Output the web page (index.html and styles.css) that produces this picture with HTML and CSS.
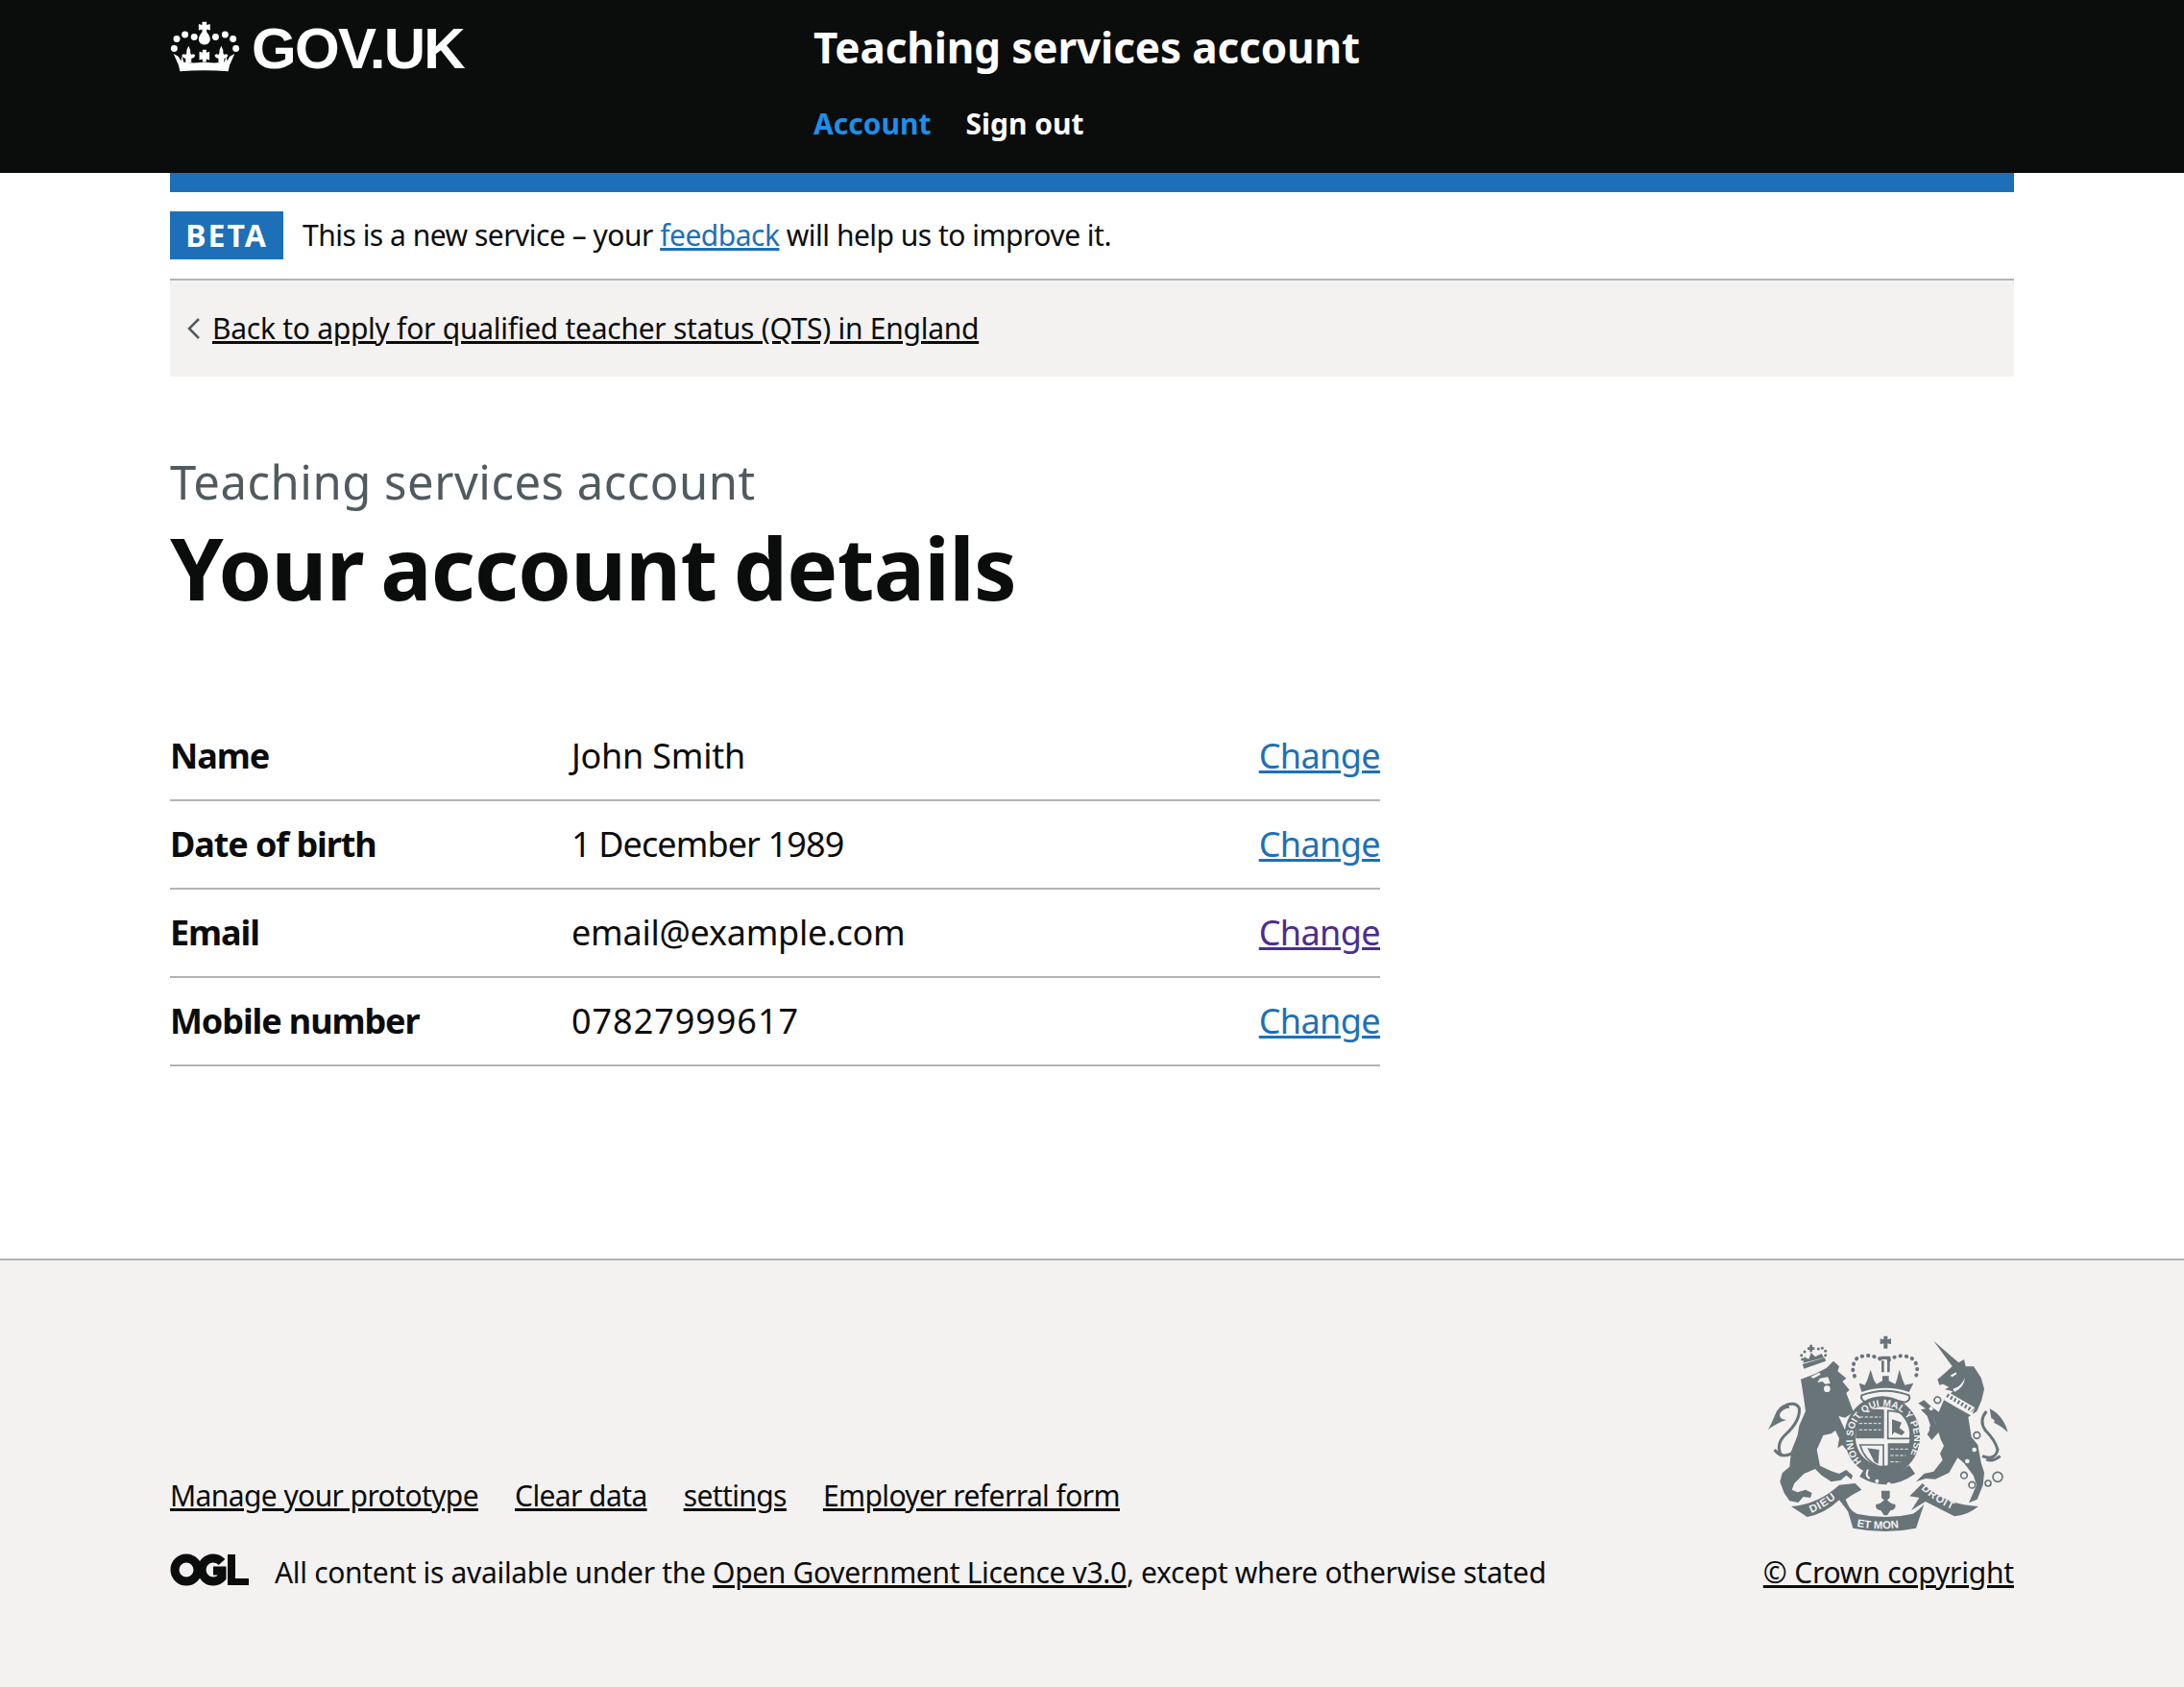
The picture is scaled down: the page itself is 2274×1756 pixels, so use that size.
FILE: index.html
```html
<!DOCTYPE html>
<html lang="en">
<head>
    <meta charset="UTF-8">
    <meta name="viewport" content="width=device-width, initial-scale=1.0">
    <title>Your account details - Teaching services account</title>
    <link rel="stylesheet" href="styles.css">
</head>
<body>
    <header class="site-header">
        <div class="container header-inner">
            <a class="logo" href="#">
                <svg class="crown" viewBox="50 62 218 160" aria-hidden="true">
                    <defs>
                        <path id="fleur" d="M0 140q7 12 6 22l3 6q8-6 12 2-2 8-12 10v12H-9v-12q-10-2-12-10 4-8 12-2l3-6q-1-10 6-22z"/>
                    </defs>
                    <g fill="#fff">
                        <circle cx="70" cy="118" r="10.5"/><circle cx="96" cy="104" r="10.5"/><circle cx="125" cy="112" r="10.5"/>
                        <circle cx="192" cy="112" r="10.5"/><circle cx="222" cy="104" r="10.5"/><circle cx="247" cy="118" r="10.5"/>
                        <circle cx="62" cy="148" r="10.5"/><circle cx="256" cy="148" r="10.5"/>
                        <path d="M150 64h14v10l11-3v20l-11-3v8c7 8 11 16 11 24a18 16 0 0 1-36 0c0-8 4-16 11-24v-8l-11 3V71l11 3z"/>
                        <use href="#fleur" x="107"/>
                        <use href="#fleur" x="210"/>
                        <path d="M151 152h12v9l10-3v26l-10-3v9h-12v-9l-10 3v-26l10 3z"/>
                        <path d="M60 165l15 8 9 14 2-16 6 20 32 2 32-2 32 2 32-2 6-20 2 16 9-14 15-8-16 36-4 19q-76-6-152 0l-4-19z"/>
                    </g>
                </svg>
                <span class="logo-text">GOV.UK</span>
            </a>
            <div class="service">
                <a class="service-name" href="#">Teaching services account</a>
                <nav class="service-nav">
                    <a class="active" href="#">Account</a>
                    <a href="#">Sign out</a>
                </nav>
            </div>
        </div>
    </header>

    <div class="container">
        <div class="blue-bar"></div>
        <div class="phase-banner">
            <strong class="tag">BETA</strong>
            <span>This is a new service – your <a class="link" href="#">feedback</a> will help us to improve it.</span>
        </div>
        <div class="back-section">
            <svg class="chevron" viewBox="0 0 14 22" aria-hidden="true"><polyline points="12,1 2,11 12,21"/></svg>
            <a href="#">Back to apply for qualified teacher status (QTS) in England</a>
        </div>

        <main class="main">
            <span class="caption">Teaching services account</span>
            <h1>Your account details</h1>

            <dl class="summary-list">
                <div class="summary-row">
                    <dt>Name</dt>
                    <dd>John Smith</dd>
                    <dd class="actions"><a class="link" href="#">Change</a></dd>
                </div>
                <div class="summary-row">
                    <dt>Date of birth</dt>
                    <dd class="date">1 December 1989</dd>
                    <dd class="actions"><a class="link" href="#">Change</a></dd>
                </div>
                <div class="summary-row">
                    <dt>Email</dt>
                    <dd>email@example.com</dd>
                    <dd class="actions"><a class="link visited" href="#">Change</a></dd>
                </div>
                <div class="summary-row">
                    <dt>Mobile number</dt>
                    <dd class="phone">07827999617</dd>
                    <dd class="actions"><a class="link" href="#">Change</a></dd>
                </div>
            </dl>
        </main>
    </div>

    <footer class="site-footer">
        <div class="container footer-inner">
            <div class="footer-meta">
                <ul class="footer-links">
                    <li><a href="#">Manage your prototype</a></li>
                    <li><a href="#">Clear data</a></li>
                    <li><a href="#">settings</a></li>
                    <li><a href="#">Employer referral form</a></li>
                </ul>
                <div class="licence">
                    <svg class="ogl" viewBox="0 0 82 34" aria-hidden="true">
                        <circle class="ogl-stroke" cx="17" cy="17" r="12"/>
                        <path class="ogl-stroke" d="M54 9a12 12 0 1 0 0 16V18H45"/>
                        <path d="M60 1h8v25h14v7H60z" fill="#0b0c0c"/>
                    </svg>
                    <span>All content is available under the <a href="#">Open Government Licence v3.0</a>, except where otherwise stated</span>
                </div>
            </div>
            <div class="footer-crest">
                <svg class="crest" viewBox="0 0 780 630" aria-hidden="true">
                    <defs>
                        <path id="garter" d="M70 368A96 102 0 1 1 206 368"/>
                        <path id="ribbon-left" d="M258 618Q315 595 362 545"/>
                        <path id="ribbon-mid" d="M400 660Q490 676 580 655"/>
                        <path id="ribbon-right" d="M600 542Q650 590 725 618"/>
                    </defs>

                    <!-- lion -->
                    <g transform="translate(0 15)">
                        <path class="crest-fill" d="M120 125L165 108 200 90 222 68 240 85 235 100 262 122 250 132 272 158 262 168 285 228 258 245 238 240 262 292 282 320 280 345 262 345 250 330 235 340 240 310 228 285 215 295 190 300 170 345 180 395 215 412 240 420 262 408 282 425 278 438 262 425 245 440 215 445 185 425 165 405 130 420 100 450 92 470 110 478 135 470 155 480 150 495 128 492 112 510 85 505 68 480 55 445 62 418 85 398 90 350 110 300 115 270 135 225 128 175Z"/>
                        <path class="crest-fill" d="M80 200Q50 205 38 240 28 265 18 282 45 262 75 252 50 250 55 232 65 215 85 215Z"/>
                        <path class="crest-stroke" d="M95 355Q60 375 38 345M60 365Q40 330 70 300 120 255 115 215 105 195 75 205"/>
                        <path class="crest-hole" d="M172 135L180 122 205 118 212 138 196 140 188 132ZM150 118L178 104 182 110 160 122Z"/>
                        <circle class="crest-hole" cx="202" cy="155" r="10"/>
                        <!-- lion crown -->
                        <path class="crest-fill" d="M130 92L125 78 195 58 198 68ZM128 74L130 55 145 62 152 42 165 55 185 45 192 58Z"/>
                        <path class="crest-fill" d="M148 40V33H141V25H148V17H156V25H163V33H156V40Z"/>
                        <g class="crest-fill">
                            <circle cx="122" cy="50" r="4.5"/><circle cx="125" cy="63" r="4.5"/><circle cx="132" cy="39" r="4.5"/>
                            <circle cx="175" cy="30" r="4.5"/><circle cx="187" cy="28" r="4.5"/><circle cx="197" cy="37" r="4.5"/><circle cx="197" cy="50" r="4.5"/>
                        </g>
                    </g>

                    <!-- shield and crown -->
                    <g transform="translate(240 30)">
                        <path class="crest-fill" d="M139 -25H151V-14L162 -17V1L151 -2V14H139V-2L128 1V-17L139 -14ZM130 38H160V48H130ZM132 52H140V88H132ZM150 52H158V88H150Z"/>
                        <path class="crest-dots" d="M48 100Q35 70 55 45 90 25 135 50M155 50Q195 25 232 48 250 70 240 100"/>
                        <path class="crest-fill" d="M62 122L80 128 88 112 98 80 108 112 116 125 135 115 135 100H155V115L175 125 180 112 188 80 198 112 205 128 232 122 218 150Q145 125 70 150Z"/>
                        <path class="crest-band" d="M70 160Q145 132 218 160 225 175 205 182 145 165 85 182 65 175 70 160Z"/>
                        <path class="crest-fill" fill-rule="evenodd" d="M135 163A118 125 0 1 1 134 163ZM135 196A85 92 0 1 0 136 196Z"/>
                        <path class="crest-fill" d="M58 212Q100 200 140 205V295H52Q50 250 58 212ZM152 310H222Q212 370 152 398Z"/>
                        <path class="crest-fine" d="M152 208Q190 208 218 228 226 260 221 295H152ZM65 315H138V388Q80 370 65 315Z"/>
                        <path class="crest-fill" d="M165 235L195 245 188 262 205 275 195 285 172 275 165 285ZM88 325L125 330 122 375 110 368Z"/>
                        <path class="crest-charge" d="M65 228H130M62 248H130M62 268H130M160 328H215M160 348H208M160 368H192"/>
                        <path class="crest-strap" d="M72 400Q150 448 228 392"/>
                        <circle class="crest-hole" cx="118" cy="428" r="6"/>
                        <circle class="crest-hole" cx="155" cy="437" r="6"/>
                        <path class="crest-line" d="M90 392Q80 412 95 420"/>
                    </g>

                    <!-- unicorn -->
                    <g transform="translate(465 0)">
                        <path class="crest-fill" d="M70 20L148 88 165 78 170 100 195 100 218 135 228 170 220 205 205 240 178 258 188 320 208 345 218 400 228 432 224 470 206 515 180 526 192 498 204 470 194 440 165 402 145 385 118 432 75 452 45 450 15 460 40 435 70 428 98 392 90 372 102 348 92 328 78 282 66 252 86 305 64 330 50 312 62 290 50 255 30 235 45 232 22 215 40 205 62 225 86 242 104 200 130 178 105 172 118 165 100 155 88 158 82 140 100 125 128 100Z"/>
                        <path class="crest-fill" d="M245 232Q285 250 302 305 280 285 258 275 265 268 250 262Z"/>
                        <path class="crest-stroke" d="M222 380Q262 395 270 360 262 330 232 300 210 270 235 240M235 390Q250 400 278 380"/>
                        <path class="crest-hole" d="M130 170Q155 165 168 135 165 165 135 180ZM122 128L140 118 142 124 128 133Z"/>
                        <path class="crest-hole" d="M112 178L198 228 190 255 102 205Z"/>
                        <path class="crest-crenel" d="M112 190L192 238"/>
                        <circle class="crest-hole" cx="197" cy="360" r="7"/>
                        <circle class="crest-hole" cx="175" cy="396" r="7"/>
                        <circle class="crest-hole" cx="62" cy="232" r="6"/>
                        <g class="crest-ring">
                            <circle cx="82" cy="205" r="10"/><circle cx="70" cy="292" r="11"/><circle cx="205" cy="315" r="10"/>
                            <circle cx="165" cy="440" r="10"/><circle cx="190" cy="470" r="10"/><circle cx="240" cy="465" r="9"/><circle cx="270" cy="445" r="15"/>
                        </g>
                    </g>

                    <!-- ribbon -->
                    <g transform="translate(-105 -60)">
                        <path class="crest-fill" d="M195 597Q280 590 345 530L395 525 415 545Q385 560 365 575 375 600 385 610L372 612Q355 590 345 577 300 620 245 630Z"/>
                        <path class="crest-fill" d="M368 598Q385 612 400 620 490 640 575 620 590 612 610 590L600 620 585 665Q490 685 388 665Z"/>
                        <path class="crest-fill" d="M565 565L605 525Q670 590 780 597 745 625 705 628 650 600 615 582 600 590 570 610L595 570Z"/>
                        <path class="crest-fill" d="M477 548H503V570L490 582 477 570ZM490 572Q505 590 520 590 525 605 505 610L495 625H485L475 610Q455 605 460 590 475 590 490 572Z"/>
                    </g>

                    <g class="crest-text">
                        <text font-size="30" transform="translate(240 30)"><textPath href="#garter" textLength="440">HONI SOIT QUI MAL Y PENSE</textPath></text>
                        <g transform="translate(-105 -60)">
                            <text font-size="34" letter-spacing="3"><textPath href="#ribbon-left">DIEU</textPath></text>
                            <text font-size="34"><textPath href="#ribbon-mid">ET MON</textPath></text>
                            <text font-size="34" letter-spacing="3"><textPath href="#ribbon-right">DROIT</textPath></text>
                        </g>
                    </g>
                </svg>
                <a href="#">© Crown copyright</a>
            </div>
        </div>
    </footer>
</body>
</html>
```

FILE: styles.css
```css
/* General Styles */
* {
    box-sizing: border-box;
}

html, body {
    height: 100%;
}

body {
    display: flex;
    flex-direction: column;
    min-height: 1756px;
    margin: 0;
    font-family: "Noto Sans", Arial, sans-serif;
    font-size: 36px;
    line-height: 50px;
    letter-spacing: -0.25px;
    color: #0b0c0c;
    background-color: #fff;
}

a {
    color: inherit;
}

.container {
    width: 1920px;
    margin: 0 auto;
}

.link {
    color: #1d70b8;
}

.link.visited {
    color: #4c2c92;
}

/* Header */
.site-header {
    height: 180px;
    background-color: #0b0c0c;
}

.header-inner {
    display: flex;
}

.logo {
    display: flex;
    align-items: flex-start;
    width: 670px;
    padding-top: 22px;
    color: #fff;
    text-decoration: none;
}

.crown {
    width: 73px;
    height: 53px;
    margin-right: 12px;
}

.logo-text {
    padding-top: 2px;
    font-family: "Liberation Sans", Arial, sans-serif;
    font-weight: bold;
    font-size: 60px;
    line-height: 54px;
    letter-spacing: -1.7px;
}

.service {
    padding-top: 21px;
}

.service-name {
    display: block;
    font-weight: bold;
    font-size: 44px;
    line-height: 56px;
    letter-spacing: -0.1px;
    color: #fff;
    text-decoration: none;
}

.service-nav {
    display: flex;
    gap: 36px;
    margin-top: 27px;
    font-weight: bold;
    font-size: 30px;
    line-height: 50px;
    letter-spacing: 0;
}

.service-nav a {
    color: #fff;
    text-decoration: none;
}

.service-nav a.active {
    color: #1d8feb;
}

/* Phase banner */
.blue-bar {
    height: 20px;
    background-color: #1d70b8;
}

.phase-banner {
    display: flex;
    align-items: center;
    gap: 20px;
    height: 92px;
    font-size: 30px;
    letter-spacing: -0.5px;
    border-bottom: 2px solid #b1b4b6;
}

.tag {
    width: 118px;
    height: 50px;
    font-size: 32px;
    line-height: 50px;
    letter-spacing: 2px;
    text-align: center;
    color: #fff;
    background-color: #1d70b8;
}

/* Back link */
.back-section {
    display: flex;
    align-items: center;
    height: 100px;
    padding-left: 18px;
    font-size: 30px;
    letter-spacing: -0.27px;
    background-color: #f3f2f1;
}

.chevron {
    width: 14px;
    height: 22px;
    margin-right: 12px;
}

.chevron polyline {
    fill: none;
    stroke: #505a5f;
    stroke-width: 2.5;
}

/* Main */
.main {
    padding-top: 80px;
    padding-bottom: 200px;
}

.caption {
    display: block;
    font-size: 49px;
    line-height: 58px;
    letter-spacing: 0.5px;
    color: #505a5f;
}

h1 {
    margin: 11px 0 101px;
    font-size: 89px;
    line-height: 100px;
    letter-spacing: -0.7px;
    word-spacing: -5px;
}

.summary-list {
    width: 1260px;
    margin: 0;
}

.summary-row {
    display: flex;
    padding: 20px 0;
    border-bottom: 2px solid #b1b4b6;
}

.summary-row dt {
    width: 418px;
    font-weight: bold;
    letter-spacing: -1.1px;
}

.summary-row dd {
    margin: 0;
}

.summary-row .date {
    letter-spacing: -0.9px;
}

.summary-row .phone {
    letter-spacing: 0.95px;
}

.summary-row .actions {
    margin-left: auto;
    letter-spacing: -0.6px;
}

/* Footer */
.site-footer {
    flex: 1;
    padding-top: 77px;
    font-size: 30px;
    line-height: 40px;
    background-color: #f3f2f1;
    border-top: 2px solid #b1b4b6;
}

.footer-inner {
    display: flex;
    justify-content: space-between;
    align-items: flex-end;
}

.footer-links {
    display: flex;
    gap: 38px;
    margin: 0 0 40px;
    padding: 0;
    list-style: none;
    letter-spacing: -0.6px;
}

.licence {
    display: flex;
    align-items: flex-start;
    letter-spacing: -0.32px;
}

.ogl {
    width: 82px;
    height: 34px;
    margin-right: 27px;
}

.ogl-stroke {
    fill: none;
    stroke: #0b0c0c;
    stroke-width: 9;
}

.footer-crest {
    display: flex;
    flex-direction: column;
    align-items: flex-end;
    letter-spacing: -0.2px;
}

.crest {
    width: 260px;
    height: 210px;
    margin-right: 2px;
    margin-bottom: 18px;
}

.crest-fill {
    fill: #687478;
}

.crest-stroke {
    fill: none;
    stroke: #687478;
    stroke-width: 9;
}

.crest-hole {
    fill: #f3f2f1;
}

.crest-ring circle {
    fill: none;
    stroke: #687478;
    stroke-width: 5;
}

.crest-band {
    fill: #f3f2f1;
    stroke: #687478;
    stroke-width: 6;
}

.crest-fine {
    fill: none;
    stroke: #687478;
    stroke-width: 5;
}

.crest-charge {
    fill: none;
    stroke: #f3f2f1;
    stroke-width: 3;
    stroke-dasharray: 10 5;
}

.crest-strap {
    fill: none;
    stroke: #687478;
    stroke-width: 32;
}

.crest-line {
    fill: none;
    stroke: #f3f2f1;
    stroke-width: 6;
}

.crest-crenel {
    fill: none;
    stroke: #687478;
    stroke-width: 12;
    stroke-dasharray: 6 7;
}

.crest-dots {
    fill: none;
    stroke: #687478;
    stroke-width: 12;
    stroke-linecap: round;
    stroke-dasharray: 1 18;
}

.crest-text {
    font-family: "Liberation Sans", Arial, sans-serif;
    font-weight: bold;
    letter-spacing: 0;
    fill: #f3f2f1;
}
```
